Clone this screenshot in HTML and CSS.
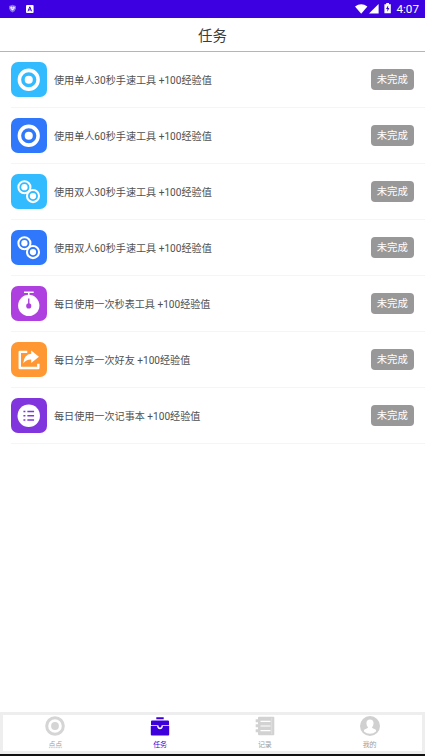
FILE: index.html
```html
<!DOCTYPE html>
<html lang="zh-CN">
<head>
<meta charset="utf-8">
<title>任务</title>
<link rel="stylesheet" href="styles.css">
</head>
<body>
<svg class="defs" width="0" height="0">
  <defs>
    <symbol id="single" viewBox="0 0 36 36">
      <circle cx="18" cy="18" r="9.5" fill="none" stroke="#fff" stroke-width="3.6"/>
      <circle cx="18" cy="18" r="4.1" fill="#fff"/>
    </symbol>
    <symbol id="double" viewBox="0 0 36 36">
      <g fill="none" stroke="#fff" stroke-width="2.1">
        <circle cx="13.6" cy="13.4" r="6.1"/>
        <circle cx="22.3" cy="22.4" r="6.1"/>
      </g>
      <circle cx="13.6" cy="13.4" r="3.2" fill="#fff"/>
      <circle cx="22.3" cy="22.4" r="3.2" fill="#fff"/>
    </symbol>
  </defs>
</svg>
<div class="screen">
  <div class="status">
    <svg width="9" height="9" viewBox="0 0 9 9"><path d="M4.5.8 8 1.9v2.3Q7.7 7 4.5 8.5 1.3 7 1 4.2V1.9Z" fill="#8569ee"/><path d="M2.2 3.1Q3.4 2 4.5 3.3 5.6 2 6.8 3.1 7 4.7 4.5 6.5 2 4.7 2.2 3.1Z" fill="#fff"/><path d="M3.6 4.1h1.8" stroke="#5630df" stroke-width=".7"/></svg>
    <svg class="keyboard" width="8" height="8" viewBox="0 0 8 8"><rect width="7.6" height="8" rx="1" fill="#fff"/><path d="M2 6.3 3.8 1.8 5.6 6.3M2.7 4.9h2.2" fill="none" stroke="#3d00e0" stroke-width="1"/></svg>
    <div class="system">
      <svg width="13" height="10" viewBox="0 0 13 10"><path d="M0 2.6Q6.2-2.3 12.4 2.6L6.2 9.8Z" fill="#fff"/></svg>
      <svg class="signal" width="10" height="10" viewBox="0 0 10 10"><path d="M9.6 0v9.6H0Z" fill="#fff"/></svg>
      <svg class="battery" width="8" height="11" viewBox="0 0 8 11"><path d="M2.2 0h2.8v1.2h1.8v9H.4v-9h1.8Z" fill="#fff"/><path d="M4.2 2.3 2 6h1.4v2.8L5.4 5H4.1Z" fill="#3d00e0"/></svg>
      <span class="clock">4:07</span>
    </div>
  </div>
  <header class="title">任务</header>
  <main class="list">
    <div class="row">
      <svg class="icon sky"><use href="#single"/></svg>
      <span class="label">使用单人30秒手速工具 +100经验值</span>
      <span class="state">未完成</span>
    </div>
    <div class="row">
      <svg class="icon blue"><use href="#single"/></svg>
      <span class="label">使用单人60秒手速工具 +100经验值</span>
      <span class="state">未完成</span>
    </div>
    <div class="row">
      <svg class="icon sky"><use href="#double"/></svg>
      <span class="label">使用双人30秒手速工具 +100经验值</span>
      <span class="state">未完成</span>
    </div>
    <div class="row">
      <svg class="icon blue"><use href="#double"/></svg>
      <span class="label">使用双人60秒手速工具 +100经验值</span>
      <span class="state">未完成</span>
    </div>
    <div class="row">
      <svg class="icon magenta" viewBox="0 0 36 36">
        <path d="M13.2 6.3h9.8M18 6.3v4" fill="none" stroke="#fff" stroke-width="1.6"/>
        <circle cx="18" cy="19.7" r="10.8" fill="#fff"/>
        <path d="M18 12.7v7" stroke="#ae40df" stroke-width="1.4"/>
        <circle cx="18" cy="20.2" r="2.6" fill="#ae40df"/>
      </svg>
      <span class="label">每日使用一次秒表工具 +100经验值</span>
      <span class="state">未完成</span>
    </div>
    <div class="row">
      <svg class="icon orange" viewBox="0 0 36 36">
        <path d="M16.500 10H8.900v16.300h18.800v-4.200" fill="none" stroke="#fff" stroke-width="2.500" stroke-linejoin="round"/>
        <path d="M20.500 8.500 28.300 15 20.500 21.300v-3.500Q15.500 17.600 12.300 21.800 13.200 12.600 20.500 12Z" fill="#fff"/>
      </svg>
      <span class="label">每日分享一次好友 +100经验值</span>
      <span class="state">未完成</span>
    </div>
    <div class="row">
      <svg class="icon violet" viewBox="0 0 36 36">
        <circle cx="18" cy="18" r="11.4" fill="#fff"/>
        <path d="M12.600 13.800h2M12.600 18.100h2M12.600 22.400h2M16.600 13.800h6.800M16.600 18.100h6.800M16.600 22.400h6.800" stroke="#8036dc" stroke-width="1.500"/>
      </svg>
      <span class="label">每日使用一次记事本 +100经验值</span>
      <span class="state">未完成</span>
    </div>
  </main>
  <nav class="tabs">
    <div class="tab">
      <svg width="20" height="20" viewBox="0 0 20 20"><circle cx="10" cy="10" r="8.300" fill="none" stroke="#d5d5d5" stroke-width="3"/><circle cx="10" cy="10" r="3.900" fill="#d5d5d5"/></svg>
      <span>点点</span>
    </div>
    <div class="tab active">
      <svg width="20" height="20" viewBox="0 0 20 20"><path d="M6.300 1.200h7.400v2H6.300ZM2 4.500h16q1 0 1 1v3.700H1V5.500q0-1 1-1ZM.8 10h6.300q.4 3.200 2.900 3.200t2.900-3.200h6.300v8.500q0 1-1 1H1.800q-1 0-1-1Z" fill="#3d00dc"/><path d="M8.300 9q.2 2.700 1.700 2.700t1.700-2.700Z" fill="#3d00dc"/></svg>
      <span>任务</span>
    </div>
    <div class="tab">
      <svg width="20" height="20" viewBox="0 0 20 20"><path d="M4 .7h14.500q.8 0 .8.800v17q0 .8-.8.800H4q-1 0-1-1v-2H.7v-3H3v-2H.7v-3H3v-2H.7v-3H3V1.700q0-1 1-1Z" fill="#d2d2d2"/><path d="M5.500 5.400h10M5.500 10h10M5.500 14.600h10" stroke="#fff" stroke-width="1.200"/><path d="M16.700 2v16" stroke="#e5e5e5" stroke-width=".6"/></svg>
      <span>记录</span>
    </div>
    <div class="tab">
      <svg width="20" height="20" viewBox="0 0 20 20"><circle cx="10" cy="10" r="10" fill="#d0d0d0"/><path d="M10 3.500q3.600 0 3.600 3.800 0 2.500-1.800 4 .1.900 3.700 2.100.9.600.5 2.200Q13.500 17.800 10 17.800T4 15.600q-.4-1.600.5-2.200 3.600-1.200 3.700-2.100-1.800-1.500-1.800-4Q6.400 3.500 10 3.500Z" fill="#fff"/></svg>
      <span>我的</span>
    </div>
  </nav>
</div>
</body>
</html>
```
FILE: styles.css
```css
* { box-sizing: border-box; }
body {
  margin: 0;
  background: #fff;
  font-family: Roboto, "Noto Sans CJK SC", sans-serif;
}
.defs { display: block; }
.screen {
  display: flex;
  flex-direction: column;
  width: 425px;
  height: 756px;
  overflow: hidden;
}
.status {
  display: flex;
  align-items: center;
  flex: none;
  height: 17.5px;
  padding: 0 6px 0 8px;
  background: #3d00e0;
}
.keyboard { margin-left: 9px; }
.system {
  display: flex;
  align-items: center;
  margin-left: auto;
}
.signal { margin-left: 1px; }
.battery { margin-left: 5px; }
.clock {
  margin-left: 4px;
  color: #fff;
  font-size: 11.7px;
  line-height: 17px;
  padding-top: 1px;
}
.title {
  flex: none;
  height: 34.5px;
  border-bottom: 1px solid #b5b5b5;
  color: #3c3c3c;
  font-size: 14.5px;
  line-height: 37px;
  text-align: center;
}
.list { flex: 1; }
.row {
  display: flex;
  align-items: center;
  height: 56px;
  margin-left: 11px;
  padding-right: 11px;
  border-bottom: 1px solid #f5f5f5;
}
.icon {
  flex: none;
  width: 35.5px;
  height: 35.5px;
  border-radius: 7px;
}
.sky { background: #33bbff; }
.blue { background: #2f78fc; }
.magenta { background: #ae40df; }
.orange { background: #ff9733; }
.violet { background: #8036dc; }
.label {
  margin-left: 7.5px;
  color: #505050;
  font-size: 10.1px;
  white-space: nowrap;
}
.state {
  width: 43.5px;
  height: 21.5px;
  margin-left: auto;
  border-radius: 4px;
  background: #989898;
  color: #fff;
  font-size: 10.4px;
  line-height: 22px;
  text-align: center;
}
.tabs {
  display: flex;
  flex: none;
  height: 42px;
  border: solid #eee;
  border-width: 3px 3.5px;
}
.tab {
  display: flex;
  flex: 1;
  flex-direction: column;
  align-items: center;
  padding-top: 1px;
  color: #a0a0a0;
  font-size: 7px;
  line-height: 10px;
}
.tab span { margin-top: 4px; }
.active { color: #3d00dc; }
.screen::after {
  content: "";
  flex: none;
  height: 2px;
  background: #111;
}
```
